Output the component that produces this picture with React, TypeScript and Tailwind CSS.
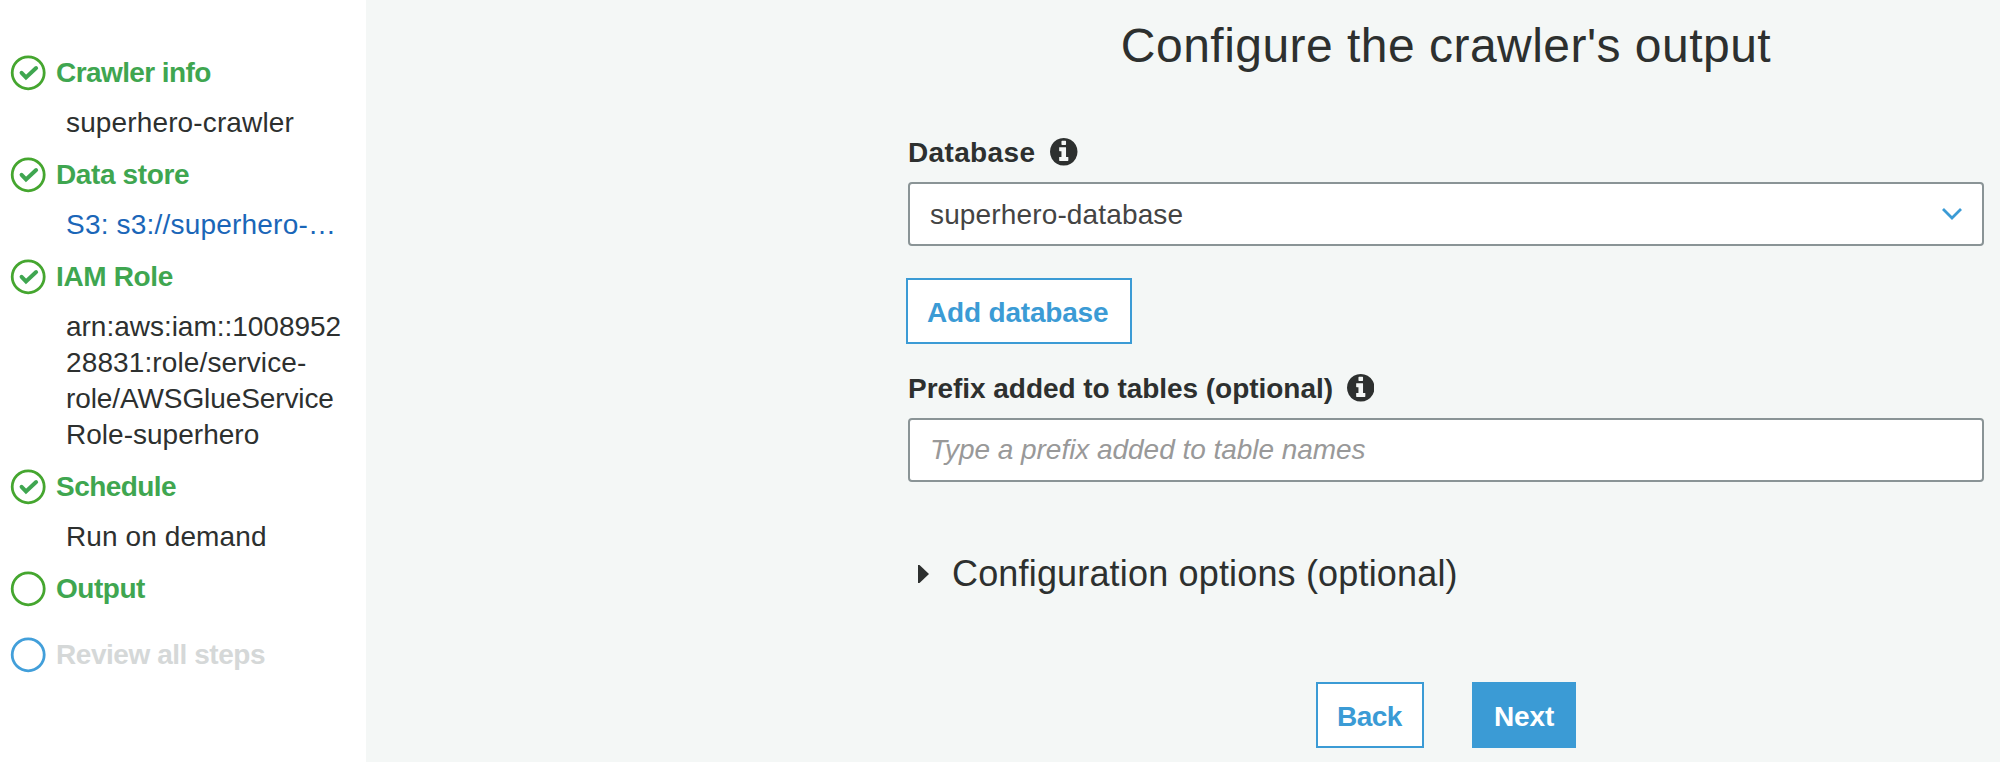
import type { ReactNode } from "react";

type StepState = "done" | "current" | "upcoming";

function StepIcon({ state }: { state: StepState }) {
  return (
    <svg className="h-[36px] w-[36px] shrink-0" viewBox="0 0 36 36" fill="none">
      <circle cx="18.2" cy="17.8" r="16" stroke={state === "upcoming" ? "#429fda" : "#45a62f"} strokeWidth="2.8" />
      {state === "done" && (
        <path d="M11.6 17.8 L16 22.4 L26.1 13" stroke="#3fa650" strokeWidth="4" strokeLinecap="round" />
      )}
    </svg>
  );
}

function Step({
  state,
  title,
  titleClass = "tracking-[-0.5px]",
  children,
}: {
  state: StepState;
  title: string;
  titleClass?: string;
  children?: ReactNode;
}) {
  return (
    <li className={state === "upcoming" ? "mt-[14px]" : ""}>
      <div className="flex h-9 items-center gap-[10px] pl-[10px]">
        <StepIcon state={state} />
        <span
          className={`font-bold leading-9 ${titleClass} ${state === "upcoming" ? "text-[#d5d8d8]" : "text-[#3fa650]"}`}
        >
          {title}
        </span>
      </div>
      {children && <div className="mt-[14px] pl-[66px] leading-9 text-[#2d302f]">{children}</div>}
    </li>
  );
}

function InfoIcon() {
  return (
    <svg className="h-[27.5px] w-[27.5px] shrink-0" viewBox="0 128 1536 1536" fill="#2d302f">
      <path d="M1024 1376v-160q0-14-9-23t-23-9h-96v-512q0-14-9-23t-23-9h-320q-14 0-23 9t-9 23v160q0 14 9 23t23 9h96v320h-96q-14 0-23 9t-9 23v160q0 14 9 23t23 9h448q14 0 23-9t9-23zm-128-896v-160q0-14-9-23t-23-9h-192q-14 0-23 9t-9 23v160q0 14 9 23t23 9h192q14 0 23-9t9-23zm640 416q0 209-103 385.5t-279.5 279.5-385.5 103-385.5-103-279.5-279.5-103-385.5 103-385.5 279.5-279.5 385.5-103 385.5 103 279.5 279.5 103 385.5z" />
    </svg>
  );
}

export default function App() {
  return (
    <div className="flex h-[762px] w-[2000px] overflow-hidden bg-[#f4f7f6] font-['Liberation_Sans',Arial,sans-serif] text-[28px] text-[#2d302f]">
      <aside className="w-[366px] shrink-0 bg-white pt-[55px]">
        <ol className="flex flex-col gap-4">
          <Step state="done" title="Crawler info" titleClass="tracking-[-0.58px]">
            <div className="tracking-[0.136px]">superhero-crawler</div>
          </Step>
          <Step state="done" title="Data store" titleClass="tracking-[-0.37px]">
            <a className="tracking-[0.2px] text-[#1a66b8]">S3: s3://superhero-…</a>
          </Step>
          <Step state="done" title="IAM Role" titleClass="tracking-[-0.35px]">
            <div className="tracking-[-0.02px]">arn:aws:iam::1008952</div>
            <div className="tracking-[0.12px]">28831:role/service-</div>
            <div className="tracking-[-0.1px]">role/AWSGlueService</div>
            <div className="tracking-[0.02px]">Role-superhero</div>
          </Step>
          <Step state="done" title="Schedule" titleClass="tracking-[-0.55px]">
            <div className="tracking-[0.1px]">Run on demand</div>
          </Step>
          <Step state="current" title="Output" titleClass="tracking-[-0.48px]" />
          <Step state="upcoming" title="Review all steps" titleClass="tracking-[-0.45px]" />
        </ol>
      </aside>

      <main className="ml-[542px] flex w-[1076px] flex-col">
        <h1 className="mt-4 text-center text-[48px] leading-[60px] tracking-[0.47px]">
          Configure the crawler's output
        </h1>

        <div className="mt-[58px] flex h-9 items-center gap-[15px]">
          <label className="pt-[2px] font-bold leading-9 tracking-[0.35px]">Database</label>
          <InfoIcon />
        </div>
        <div className="mt-3 flex h-16 items-center justify-between rounded border-2 border-[#8a9496] bg-white px-5">
          <span className="pt-[2px] leading-9 tracking-[0.144px] text-[#444444]">superhero-database</span>
          <svg className="h-[14px] w-[20px]" viewBox="0 0 20 14" fill="none">
            <path d="M1 2 L10 11 L19 2" stroke="#3b9bd5" strokeWidth="2.8" />
          </svg>
        </div>

        <button className="mt-8 -ml-[2px] h-[66px] w-[226px] border-2 border-[#3b9bd5] bg-white pt-1 pl-[19px] text-left font-bold leading-9 tracking-[-0.184px] text-[#3b9bd5]">
          Add database
        </button>

        <div className="mt-[26px] flex h-9 items-center gap-[14px]">
          <label className="pt-[2px] font-bold leading-9 tracking-[-0.04px]">Prefix added to tables (optional)</label>
          <InfoIcon />
        </div>
        <div className="mt-3 flex h-16 items-center rounded border-2 border-[#8a9496] bg-white px-5">
          <span className="italic leading-9 tracking-[-0.038px] text-[#999999]">Type a prefix added to table names</span>
        </div>

        <div className="mt-[68px] flex h-12 items-center gap-[23px] pl-[10px]">
          <svg className="h-[18px] w-[11px]" viewBox="0 0 11 18" fill="#2d302f">
            <path d="M0 0 L1.5 0 L11 9 L1.5 18 L0 18 Z" />
          </svg>
          <span className="text-[36px] leading-[48px] tracking-[0.17px]">Configuration options (optional)</span>
        </div>

        <div className="mt-[84px] flex justify-center gap-12">
          <button className="h-[66px] w-[108px] border-2 border-[#3b9bd5] bg-white pt-1 pl-[19px] text-left font-bold leading-9 tracking-[-0.5px] text-[#3b9bd5]">
            Back
          </button>
          <button className="h-[66px] w-[104px] bg-[#3b9bd5] pt-1 pl-[22px] text-left font-bold leading-9 tracking-[-0.12px] text-white">
            Next
          </button>
        </div>
      </main>
    </div>
  );
}
